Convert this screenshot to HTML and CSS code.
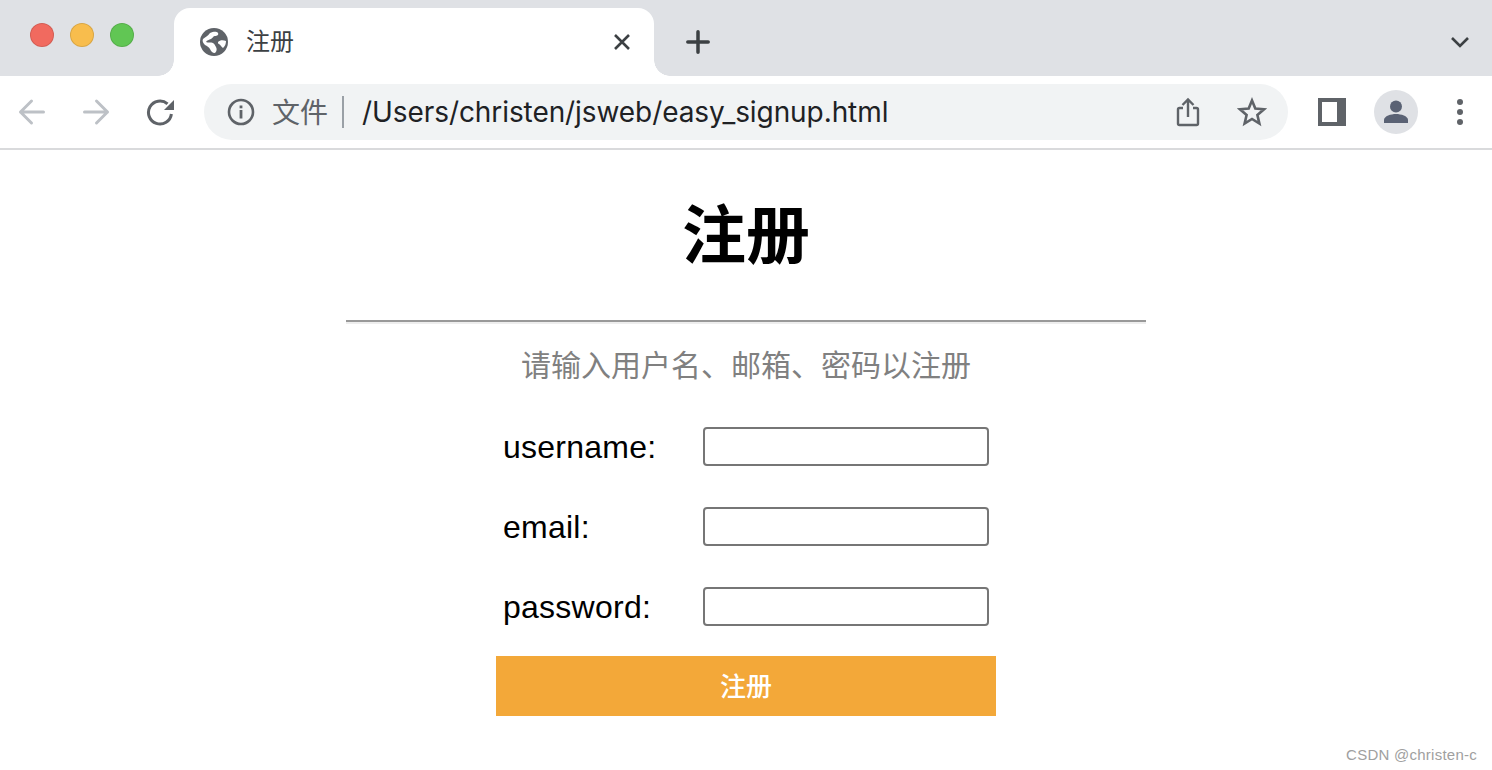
FILE: index.html
```html
<!DOCTYPE html>
<html lang="zh">
<head>
    <meta charset="UTF-8">
    <title>注册</title>
    <link rel="stylesheet" href="styles.css">
</head>
<body>

<div class="tab-strip">
    <div class="traffic-lights">
        <span class="light red"></span>
        <span class="light yellow"></span>
        <span class="light green"></span>
    </div>
    <div class="tab">
        <svg class="tab-icon" width="30" height="30" viewBox="0 0 30 30">
            <circle cx="15" cy="15" r="14" fill="#5f6368"/>
            <path d="M11 6 C14 5 17 4 19 6 C20 8 18 9 16 9 C14 9 14 11 12 12 C10 13 8 13 7 15 C9 16 12 15 14 16 C16 17 16 19 17 20 C18 22 18 24 16 26 C13 26 12 24 11 22 C10 20 8 19 6 18 C4 16 3 14 4 12 C6 10 9 9 11 6Z" fill="#fff"/>
            <path d="M19 15 C21 13 24 13 27 14 C27 17 26 19 24 21 C22 20 22 18 20 17 C19 17 19 16 19 15Z" fill="#fff"/>
        </svg>
        <span class="tab-title">注册</span>
        <svg class="tab-close" width="18" height="18" viewBox="0 0 18 18">
            <path d="M2 2 L16 16 M16 2 L2 16" stroke="#3c4043" stroke-width="2.6" fill="none"/>
        </svg>
    </div>
    <svg class="new-tab" width="24" height="24" viewBox="0 0 24 24">
        <path d="M12 1.8 V22.2 M1.8 12 H22.2" stroke="#3c4043" stroke-width="3.5" stroke-linecap="round" fill="none"/>
    </svg>
    <svg class="tab-menu" width="20" height="12" viewBox="0 0 20 12">
        <path d="M2 2 L10 10 L18 2" stroke="#3c4043" stroke-width="2.6" fill="none"/>
    </svg>
</div>

<div class="toolbar">
    <svg class="nav-icon" width="28" height="28" viewBox="0 0 28 28">
        <path d="M25.5 14 H2.5 M13.5 3 L2.5 14 L13.5 25" stroke="#bdc1c6" stroke-width="3" stroke-linecap="round" stroke-linejoin="round" fill="none"/>
    </svg>
    <svg class="nav-icon" width="28" height="28" viewBox="0 0 28 28">
        <path d="M2.5 14 H25.5 M14.5 3 L25.5 14 L14.5 25" stroke="#bdc1c6" stroke-width="3" stroke-linecap="round" stroke-linejoin="round" fill="none"/>
    </svg>
    <svg class="nav-icon reload-icon" width="30" height="30" viewBox="0 0 30 30">
        <path d="M25.4 17 A11.5 11.5 0 1 1 21.5 6.8" stroke="#5f6368" stroke-width="3" fill="none"/>
        <path d="M28 3 V13 H18 Z" fill="#5f6368"/>
    </svg>

    <div class="omnibox">
        <svg class="info-icon" width="28" height="28" viewBox="0 0 28 28">
            <circle cx="14" cy="14" r="12" stroke="#5f6368" stroke-width="2.6" fill="none"/>
            <rect x="12.6" y="12" width="2.8" height="8.5" fill="#5f6368"/>
            <rect x="12.6" y="7.5" width="2.8" height="2.8" fill="#5f6368"/>
        </svg>
        <span class="scheme">文件</span>
        <span class="divider"></span>
        <span class="url">/Users/christen/jsweb/easy_signup.html</span>
        <svg class="share-icon" width="24" height="30" viewBox="0 0 24 30">
            <path d="M7 11 H3.5 Q2 11 2 12.5 V26.5 Q2 28 3.5 28 H20.5 Q22 28 22 26.5 V12.5 Q22 11 20.5 11 H17" stroke="#5f6368" stroke-width="2.4" fill="none"/>
            <path d="M12 20 V3 M6.5 8 L12 2.5 L17.5 8" stroke="#5f6368" stroke-width="2.4" fill="none"/>
        </svg>
        <svg class="star-icon" width="30" height="30" viewBox="0 0 30 30">
            <path d="M15 3.5 L18.3 11.6 L27 12.3 L20.4 18 L22.4 26.6 L15 22 L7.6 26.6 L9.6 18 L3 12.3 L11.7 11.6 Z" stroke="#5f6368" stroke-width="2.6" stroke-linejoin="miter" fill="none"/>
        </svg>
    </div>

    <svg class="panel-icon" width="28" height="28" viewBox="0 0 28 28">
        <rect width="28" height="28" fill="#5f6368"/>
        <rect x="4" y="4" width="15" height="20" fill="#fff"/>
    </svg>
    <div class="avatar">
        <svg width="26" height="26" viewBox="0 0 26 26">
            <circle cx="13" cy="7.5" r="6" fill="#5a6274"/>
            <path d="M1 24 V21 C1 17 8 15 13 15 C18 15 25 17 25 21 V24 Z" fill="#5a6274"/>
        </svg>
    </div>
    <svg class="more-icon" width="8" height="28" viewBox="0 0 8 28">
        <circle cx="4" cy="4" r="3" fill="#5f6368"/>
        <circle cx="4" cy="14" r="3" fill="#5f6368"/>
        <circle cx="4" cy="24" r="3" fill="#5f6368"/>
    </svg>
</div>

<div class="page">
    <h1>注册</h1>
    <hr>
    <p class="subtitle">请输入用户名、邮箱、密码以注册</p>

    <form class="signup-form">
        <div class="form-row">
            <label for="username">username:</label>
            <input type="text" id="username">
        </div>
        <div class="form-row">
            <label for="email">email:</label>
            <input type="text" id="email">
        </div>
        <div class="form-row">
            <label for="password">password:</label>
            <input type="password" id="password">
        </div>
        <button type="button" class="submit-button">注册</button>
    </form>
</div>

<div class="watermark">CSDN @christen-c</div>

</body>
</html>
```

FILE: styles.css
```css
html, body {
    height: 100%;
}

body {
    font-family: "Liberation Sans", "Noto Sans CJK SC", sans-serif;
    background-color: #fff;
    color: #000;
    margin: 0;
    overflow: hidden;
    position: relative;
}

.tab-strip {
    height: 76px;
    background-color: #dfe1e5;
    display: flex;
    align-items: flex-end;
    position: relative;
}

.traffic-lights {
    display: flex;
    gap: 16px;
    width: 144px;
    padding-left: 30px;
    align-self: flex-start;
    margin-top: 23px;
}

.light {
    width: 24px;
    height: 24px;
    border-radius: 50%;
    box-sizing: border-box;
    border: 1px solid rgba(0, 0, 0, 0.12);
}

.red { background-color: #f16a5f; }
.yellow { background-color: #f8bd4d; }
.green { background-color: #61c654; }

.tab {
    width: 480px;
    height: 68px;
    margin-left: 0;
    background-color: #fff;
    border-radius: 16px 16px 0 0;
    display: flex;
    align-items: center;
    padding: 0 23px 0 25px;
    box-sizing: border-box;
    position: relative;
}

.tab::before,
.tab::after {
    content: "";
    position: absolute;
    bottom: 0;
    width: 16px;
    height: 16px;
    background: radial-gradient(circle at 0 0, #dfe1e5 15.5px, #fff 16px);
}

.tab::before {
    left: -16px;
}

.tab::after {
    right: -16px;
    background: radial-gradient(circle at 100% 0, #dfe1e5 15.5px, #fff 16px);
}

.tab-title {
    font-size: 24px;
    color: #3c4043;
    margin-left: 17px;
    padding-bottom: 6px;
    flex-grow: 1;
}

.new-tab {
    margin: 0 0 22px 32px;
}

.tab-menu {
    margin: 0 22px 28px auto;
}

.toolbar {
    height: 72px;
    border-bottom: 2px solid #d9dadc;
    display: flex;
    align-items: center;
    padding-left: 18px;
}

.nav-icon {
    margin-right: 36px;
    flex-shrink: 0;
}

.reload-icon {
    margin-right: 28px;
}

.omnibox {
    width: 1084px;
    height: 56px;
    background-color: #f1f3f4;
    border-radius: 28px;
    display: flex;
    align-items: center;
    padding-left: 23px;
    box-sizing: border-box;
}

.scheme {
    font-size: 28px;
    color: #5f6368;
    margin-left: 17px;
    padding-bottom: 2px;
}

.divider {
    width: 2px;
    height: 32px;
    background-color: #9aa0a6;
    margin: 0 18px 0 14px;
}

.url {
    font-family: Inter, "Liberation Sans", sans-serif;
    font-size: 28px;
    letter-spacing: -0.08px;
    color: #202124;
    flex-grow: 1;
}

.share-icon {
    margin-right: 37px;
}

.star-icon {
    margin-right: 21px;
}

.panel-icon {
    margin-left: 30px;
}

.avatar {
    width: 44px;
    height: 44px;
    border-radius: 50%;
    background-color: #dfe1e5;
    margin-left: 28px;
    display: flex;
    align-items: center;
    justify-content: center;
}

.more-icon {
    margin-left: 38px;
}

.page {
    width: 800px;
    margin: 0 auto;
    text-align: center;
}

h1 {
    font-size: 64px;
    line-height: 86px;
    font-weight: bold;
    margin: 0;
    padding-top: 43px;
}

hr {
    height: 4px;
    box-sizing: border-box;
    border: 0;
    border-top: 2px solid #999;
    border-bottom: 2px solid #eee;
    margin: 41px 0 0;
}

.subtitle {
    font-size: 30px;
    line-height: 40px;
    color: #808080;
    margin: 22px 0 0;
}

.signup-form {
    width: 500px;
    margin: 40px auto 0;
    text-align: left;
}

.form-row {
    display: flex;
    align-items: center;
    height: 40px;
    margin-bottom: 40px;
    padding-left: 7px;
}

.form-row:nth-of-type(3) {
    margin-bottom: 30px;
}

label {
    font-size: 32px;
    letter-spacing: 0.25px;
    width: 200px;
    padding-top: 2px;
}

input {
    width: 286px;
    height: 39px;
    box-sizing: border-box;
    border: 2px solid #767676;
    border-radius: 4px;
    padding: 0;
    background-color: #fff;
}

.submit-button {
    display: block;
    width: 500px;
    height: 60px;
    background-color: #f3a839;
    color: #fff;
    border: none;
    font-family: inherit;
    font-size: 26px;
    font-weight: 500;
    padding: 0 0 4px;
}

.watermark {
    position: absolute;
    right: 15px;
    bottom: 7px;
    font-size: 15px;
    letter-spacing: 0.25px;
    color: #a0a0a0;
}
```
